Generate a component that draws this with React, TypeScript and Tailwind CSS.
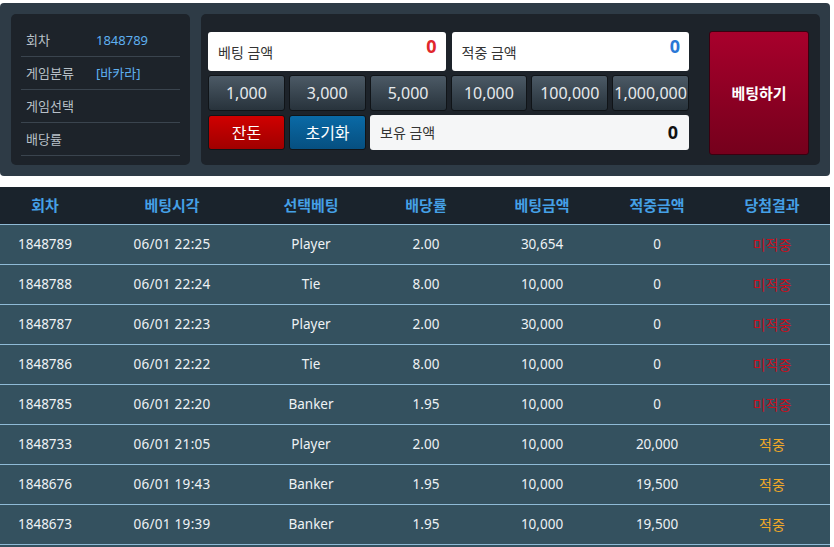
import React from "react";

const rows = [
  ["1848789", "06/01 22:25", "Player", "2.00", "30,654", "0", false],
  ["1848788", "06/01 22:24", "Tie", "8.00", "10,000", "0", false],
  ["1848787", "06/01 22:23", "Player", "2.00", "30,000", "0", false],
  ["1848786", "06/01 22:22", "Tie", "8.00", "10,000", "0", false],
  ["1848785", "06/01 22:20", "Banker", "1.95", "10,000", "0", false],
  ["1848733", "06/01 21:05", "Player", "2.00", "10,000", "20,000", true],
  ["1848676", "06/01 19:43", "Banker", "1.95", "10,000", "19,500", true],
  ["1848673", "06/01 19:39", "Banker", "1.95", "10,000", "19,500", true],
] as const;

const amounts = ["1,000", "3,000", "5,000", "10,000", "100,000", "1,000,000"];
const cols = "grid grid-cols-[90px_164px_114px_116px_116px_114px_116px]";

export default function App() {
  return (
    <div className="w-[834px] h-[547px] overflow-hidden bg-white text-[13px]" style={{ fontFamily: '"Noto Sans", "Noto Sans CJK KR", sans-serif' }}>
      <div className="w-[830px] mt-[3px] h-[173px] rounded-[4px] bg-[#2e3b46] flex pl-[11px] pt-[11px] gap-[11px]">
        <div className="w-[179px] h-[151px] rounded-[5px] bg-[#1d232a] px-[10px] pt-[10px]">
          {[
            ["회차", "1848789"],
            ["게임분류", "[바카라]"],
            ["게임선택", ""],
            ["배당률", ""],
          ].map(([k, v], i) => (
            <div key={i} className="h-[33px] flex items-center border-b border-[#3a444e] text-[13px] pt-[2px]">
              <span className="w-[75px] pl-[5px] text-[#b8c0c8]">{k}</span>
              <span className="text-[#5fb0f0] text-[13px]">{v}</span>
            </div>
          ))}
        </div>
        <div className="w-[619px] h-[151px] rounded-[5px] bg-[#1d232a] flex pl-[7px] pt-[18px] gap-[20px]">
          <div className="w-[481px] flex flex-col">
            <div className="flex gap-[6px] h-[39px]">
              <div className="flex-1 bg-white rounded-[3px] flex items-start justify-between pl-[10px] pr-[9px]">
                <span className="text-[#333] text-[14px] mt-[10px]">베팅 금액</span>
                <span className="text-[#e0262c] font-bold text-[18px] mt-[1px]">0</span>
              </div>
              <div className="flex-1 bg-white rounded-[3px] flex items-start justify-between pl-[10px] pr-[9px]">
                <span className="text-[#333] text-[14px] mt-[10px]">적중 금액</span>
                <span className="text-[#2a78d6] font-bold text-[18px] mt-[1px]">0</span>
              </div>
            </div>
            <div className="grid grid-cols-6 gap-[4px] mt-[4px] h-[36px]">
              {amounts.map((a) => (
                <div key={a} className="rounded-[3px] border border-[#101418] bg-gradient-to-b from-[#4c5a66] to-[#28333c] flex items-center justify-center text-[#e6e9ec] text-[16px]">
                  {a}
                </div>
              ))}
            </div>
            <div className="flex gap-[4px] mt-[4px] h-[35px]">
              <div className="w-[77px] rounded-[3px] border border-[#101418] bg-gradient-to-b from-[#d00000] to-[#a00000] flex items-center justify-center text-white text-[16px]">잔돈</div>
              <div className="w-[77px] rounded-[3px] border border-[#101418] bg-gradient-to-b from-[#0a6aa6] to-[#064f80] flex items-center justify-center text-white text-[16px]">초기화</div>
              <div className="flex-1 bg-[#f5f6f7] rounded-[3px] flex items-center justify-between pl-[10px] pr-[11px]">
                <span className="text-[#333] text-[14px]">보유 금액</span>
                <span className="text-[#111] font-bold text-[18px]">0</span>
              </div>
            </div>
          </div>
          <div className="w-[100px] h-[124px] -mt-[1px] rounded-[3px] border border-[#3a0010] bg-gradient-to-b from-[#a8002c] to-[#75001c] flex items-center justify-center text-white font-bold text-[15px]">
            베팅하기
          </div>
        </div>
      </div>
      <div className="w-[830px] mt-[11px]">
        <div className={`${cols} h-[37px] bg-[#1a232c] items-center text-center text-[#45a0e6] font-bold text-[15px]`}>
          {["회차", "베팅시각", "선택베팅", "배당률", "베팅금액", "적중금액", "당첨결과"].map((h) => (
            <div key={h}>{h}</div>
          ))}
        </div>
        {rows.map((r) => (
          <div key={r[0]} className={`${cols} h-[40px] bg-[#34515f] border-t border-[#8fbad6] items-center text-center text-[#eef2f5] text-[13.5px]`}>
            <div>{r[0]}</div>
            <div className="tracking-[0.3px]">{r[1]}</div>
            <div>{r[2]}</div>
            <div>{r[3]}</div>
            <div>{r[4]}</div>
            <div>{r[5]}</div>
            <div className={r[6] ? "text-[#f0a828] text-[14px]" : "text-[#c8101e] text-[14px]"}>{r[6] ? "적중" : "미적중"}</div>
          </div>
        ))}
        <div className="h-[40px] bg-[#34515f] border-t border-[#8fbad6]" />
      </div>
    </div>
  );
}
